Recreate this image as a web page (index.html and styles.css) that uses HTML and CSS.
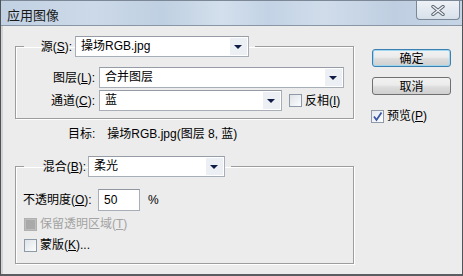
FILE: index.html
```html
<!DOCTYPE html>
<html lang="zh-CN">
<head>
  <meta charset="UTF-8" />
  <title>应用图像</title>
  <link rel="stylesheet" href="styles.css">
</head>
<body>

<div class="window">
  <div class="titlebar">
    <span class="title">应用图像</span>
    <button class="close" aria-label="关闭">
      <svg width="14" height="11" viewBox="0 0 14 11">
        <path d="M2 1.5 L12 9.5 M12 1.5 L2 9.5" stroke="#5b6470" stroke-width="3.4" stroke-linecap="round" fill="none"/>
        <path d="M2 1.5 L12 9.5 M12 1.5 L2 9.5" stroke="#f4f6f9" stroke-width="1.4" stroke-linecap="round" fill="none"/>
      </svg>
    </button>
  </div>

  <div class="client">
    <div class="main">

      <fieldset class="group group-source">
        <legend>
          <label class="lbl lbl-source">源(<u>S</u>):</label>
          <span class="combo combo-source"><span class="value">操场RGB.jpg</span><span class="arrow"></span></span>
        </legend>
        <div class="row row-layer">
          <label class="lbl lbl-wide">图层(<u>L</u>):</label>
          <span class="combo combo-layer"><span class="value">合并图层</span><span class="arrow"></span></span>
        </div>
        <div class="row row-channel">
          <label class="lbl lbl-wide">通道(<u>C</u>):</label>
          <span class="combo combo-channel"><span class="value">蓝</span><span class="arrow"></span></span>
          <span class="check"></span>
          <span class="check-label">反相(<u>I</u>)</span>
        </div>
      </fieldset>

      <div class="target"><span class="target-key">目标:</span>操场RGB.jpg(图层 8, 蓝)</div>

      <fieldset class="group group-blend">
        <legend>
          <label class="lbl lbl-blend">混合(<u>B</u>):</label>
          <span class="combo combo-blend"><span class="value">柔光</span><span class="arrow"></span></span>
        </legend>
        <div class="row row-opacity">
          <label class="lbl lbl-opacity">不透明度(<u>O</u>):</label>
          <span class="field">50</span>
          <span class="unit">%</span>
        </div>
        <div class="row row-check">
          <span class="check disabled"></span>
          <span class="check-label muted">保留透明区域(<u>T</u>)</span>
        </div>
        <div class="row row-check">
          <span class="check"></span>
          <span class="check-label">蒙版(<u>K</u>)...</span>
        </div>
      </fieldset>

    </div>

    <div class="side">
      <button class="btn btn-default">确定</button>
      <button class="btn">取消</button>
      <div class="row row-preview">
        <span class="check checked">
          <svg width="11" height="11" viewBox="0 0 11 11">
            <path d="M2 5.5 L4.5 9 L9.5 1.5" stroke="#3b55a8" stroke-width="1.8" fill="none"/>
          </svg>
        </span>
        <span class="check-label">预览(<u>P</u>)</span>
      </div>
    </div>
  </div>
</div>

</body>
</html>
```

FILE: styles.css
```css
* {
  box-sizing: border-box;
}
body {
  margin: 0;
  background: #ececec;
  font-family: "Liberation Sans", "Noto Sans CJK SC", sans-serif;
  font-size: 12px;
  color: #000;
}
u {
  text-decoration: underline;
  text-underline-offset: 1px;
}

.window {
  width: 463px;
  height: 276px;
  display: flex;
  flex-direction: column;
  border-left: 1px solid #4f5256;
  border-right: 1px solid #4f5256;
  border-bottom: 2px solid #5a5d61;
  background: #ececec;
}

/* title bar */
.titlebar {
  height: 26px;
  flex: none;
  display: flex;
  align-items: flex-start;
  justify-content: space-between;
  border-top: 1px solid #7d8896;
  border-bottom: 1px solid #8996a6;
  background: linear-gradient(90deg, #c1d1e3 0%, #ccd9e8 20%, #bfd0e2 35%, #d3dfec 48%, #c3d3e5 58%, #d0dcea 70%, #bfcfe1 85%, #c6d5e6 100%);
}
.title {
  margin: 6px 0 0 6px;
  font-family: "Noto Sans CJK SC", sans-serif;
  font-size: 13px;
  line-height: 16px;
  color: #1a1a1a;
}
.close {
  width: 44px;
  height: 19px;
  margin-right: 2px;
  padding: 0;
  display: flex;
  align-items: center;
  justify-content: center;
  border: 1px solid #7b8797;
  border-top: none;
  border-radius: 0 0 4px 4px;
  background: linear-gradient(#eef2f7, #d7e0ea);
}

/* client area */
.client {
  flex: 1;
  display: flex;
  border-left: 2px solid #d3d3d3;
  padding-left: 12px;
}
.main {
  width: 339px;
}
.side {
  margin-left: 18px;
  padding-top: 23px;
  display: flex;
  flex-direction: column;
}

/* group boxes */
.group {
  margin: 0;
  padding: 0 8px;
  border: 1px solid #9d9d9d;
  box-shadow: 1px 1px 0 #fff, inset 1px 1px 0 #fff;
  min-inline-size: 0;
}
.group legend {
  padding: 0 6px 0 0;
  display: flex;
  align-items: center;
}
.group-source {
  margin-top: 10px;
  padding-bottom: 7px;
}
.group-blend {
  margin-top: 14px;
  padding-bottom: 10px;
}

.lbl {
  display: inline-block;
  text-align: right;
  line-height: 14px;
  white-space: nowrap;
}
.lbl-source {
  width: 48px;
  margin-right: 3px;
}
.lbl-wide {
  width: 71px;
  margin-right: 4px;
}
.lbl-blend {
  width: 62px;
  margin-right: 2px;
}
.lbl-opacity {
  width: 75px;
  text-align: left;
  margin-left: -1px;
}

/* combo boxes */
.combo {
  height: 21px;
  display: inline-flex;
  align-items: stretch;
  background: #fff;
  border: 1px solid #a7aeb8;
  border-top-color: #959ca6;
}
.combo .value {
  flex: 1;
  padding-left: 5px;
  line-height: 19px;
  white-space: nowrap;
}
.combo .arrow {
  width: 17px;
  margin: 1px;
  background: #eceff3;
  position: relative;
}
.combo .arrow::after {
  content: "";
  position: absolute;
  left: 4px;
  top: 7px;
  border-left: 4px solid transparent;
  border-right: 4px solid transparent;
  border-top: 4px solid #101c48;
}
.combo-source {
  width: 174px;
}
.combo-layer {
  width: 245px;
}
.combo-channel {
  width: 183px;
}
.combo-blend {
  width: 137px;
}

.row {
  display: flex;
  align-items: center;
}
.row-layer {
  margin-top: 10px;
}
.row-channel {
  margin-top: 2px;
}
.row-channel .check {
  margin-left: 7px;
}
.row-opacity {
  margin-top: 12px;
}
.row-check {
  height: 16px;
  margin-top: 5px;
}

/* text field */
.field {
  width: 42px;
  height: 22px;
  padding-left: 5px;
  line-height: 20px;
  background: #fff;
  border: 1px solid #a7aeb8;
  border-top-color: #8f96a0;
}
.unit {
  margin-left: 8px;
}

/* check boxes */
.check {
  width: 13px;
  height: 13px;
  flex: none;
  display: inline-flex;
  align-items: center;
  justify-content: center;
  border: 1px solid #8e9aa8;
  background: linear-gradient(135deg, #dfe3e8, #fbfcfd);
}
.check.disabled {
  border-color: #b0b0b0;
  background: #a9a9a9;
  box-shadow: inset 0 0 0 1px #bdbdbd;
}
.check.checked {
  background: linear-gradient(135deg, #e4e8ee, #fdfdfe);
}
.check-label {
  margin-left: 3px;
  line-height: 14px;
  white-space: nowrap;
}
.check-label.muted {
  color: #a3a3a3;
}

.target {
  margin: 7px 0 0 53px;
  line-height: 16px;
  white-space: nowrap;
}
.target-key {
  margin-right: 12px;
}

/* buttons */
.btn {
  width: 79px;
  height: 18px;
  padding: 0;
  font-family: "Noto Sans CJK SC", sans-serif;
  font-size: 12px;
  line-height: 14px;
  color: #000;
  border: 1px solid #707070;
  border-radius: 3px;
  background: linear-gradient(#f2f2f2 0%, #ebebeb 45%, #dddddd 55%, #cfcfcf 100%);
}
.btn + .btn {
  margin-top: 10px;
}
.btn-default {
  border-color: #3c7fb1;
  box-shadow: inset 0 0 0 1px #9fd7f0;
}
.row-preview {
  margin-top: 14px;
  margin-left: -1px;
}
```
